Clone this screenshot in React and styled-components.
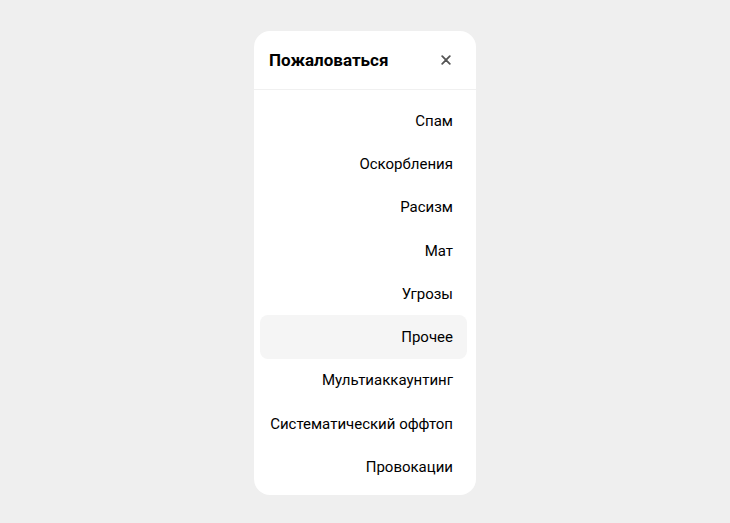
import styled, { createGlobalStyle } from "styled-components";

const reasons = [
	"Спам",
	"Оскорбления",
	"Расизм",
	"Мат",
	"Угрозы",
	"Прочее",
	"Мультиаккаунтинг",
	"Систематический оффтоп",
	"Провокации",
];

const GlobalStyle = createGlobalStyle`
	html, body {
		margin: 0;
		padding: 0;
		background: #efefef;
		font-family: Roboto, "Noto Sans", sans-serif;
		color: #000;
	}
`;

const Page = styled.div`
	width: 730px;
	height: 523px;
	display: flex;
	justify-content: center;
	align-items: flex-start;
	padding-top: 31px;
	box-sizing: border-box;
`;

const Card = styled.div`
	width: 222px;
	background: #fff;
	border-radius: 16px;
	overflow: hidden;
`;

const Header = styled.div`
	height: 58px;
	display: flex;
	align-items: center;
	justify-content: space-between;
	padding: 0 20px 0 15px;
	border-bottom: 1px solid #f0f0f0;
`;

const Title = styled.h3`
	margin: 0;
	font-size: 17px;
	font-weight: 700;
	color: #000;
`;

const CloseButton = styled.button`
	width: 20px;
	height: 20px;
	padding: 0;
	border: none;
	background: none;
	display: flex;
	align-items: center;
	justify-content: center;
	color: #555;
	cursor: pointer;
`;

const List = styled.ul`
	list-style: none;
	margin: 0;
	padding: 9px 9px 6px 6px;
`;

const Item = styled.li`
	height: 43.3px;
	display: flex;
	align-items: center;
	justify-content: flex-end;
	padding: 0 14px 0 8px;
	border-radius: 8px;
	font-size: 15px;
	white-space: nowrap;
	background: ${(p) => (p.$active ? "#f5f5f5" : "transparent")};
	cursor: pointer;
`;

export default function App() {
	return (
		<>
			<GlobalStyle />
			<Page>
				<Card>
					<Header>
						<Title>Пожаловаться</Title>
						<CloseButton aria-label="Закрыть">
							<svg width="10" height="10" viewBox="0 0 10 10">
								<path
									d="M1.2 1.2 L8.8 8.8 M8.8 1.2 L1.2 8.8"
									stroke="currentColor"
									strokeWidth="1.8"
									strokeLinecap="round"
								/>
							</svg>
						</CloseButton>
					</Header>
					<List>
						{reasons.map((r) => (
							<Item key={r} $active={r === "Прочее"}>
								{r}
							</Item>
						))}
					</List>
				</Card>
			</Page>
		</>
	);
}
